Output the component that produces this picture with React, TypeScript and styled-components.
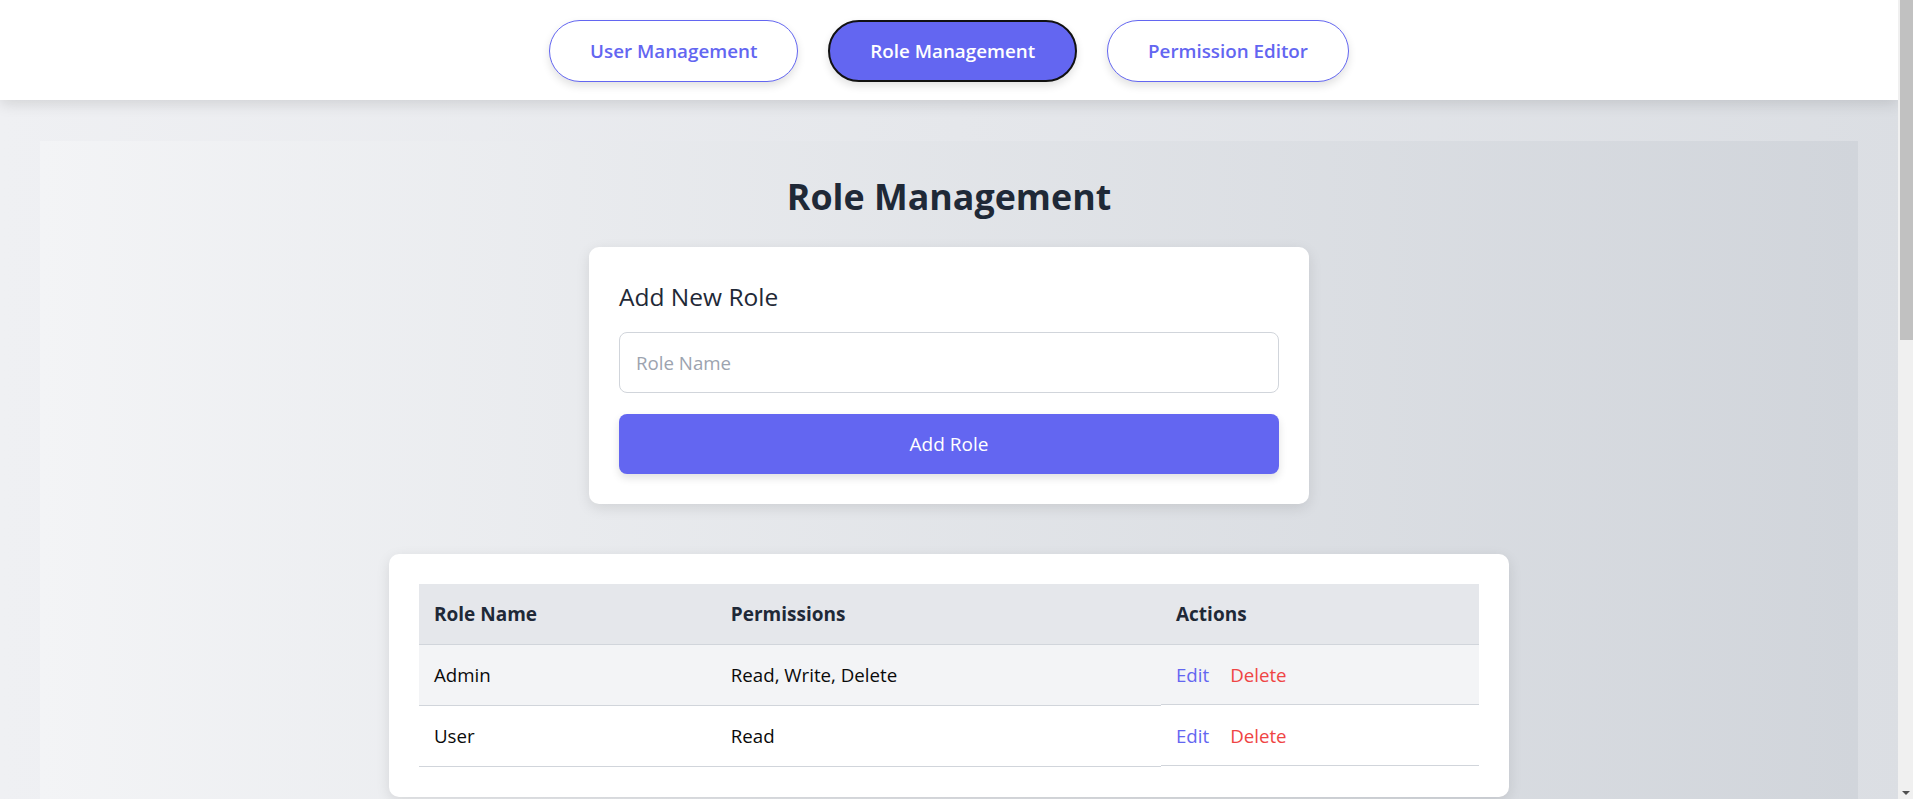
import { FC } from 'react';
import styled, { createGlobalStyle } from 'styled-components';

/* PAGE BASE (right padding leaves room for the scrollbar strip) */
const GlobalStyle = createGlobalStyle`
	html, body {
		margin: 0;
		padding: 0;
	}

	body {
		padding-right: 15px;
		font-family: 'Open Sans', 'Noto Sans', sans-serif;
		background: linear-gradient(to right, #eff0f3, #dbdee3);
		color: #1f2937;
	}

	* {
		box-sizing: border-box;
	}
`;

/* WINDOW SCROLLBAR, drawn over the right edge */
const ScrollTrack = styled.div`
	position: fixed;
	top: 0;
	right: 0;
	width: 15px;
	height: 100vh;
	background: #f0f0f0;
	z-index: 10;
`;

const ScrollThumb = styled.div`
	margin-left: 2px;
	width: 13px;
	height: 340px;
	background: #c1c1c1;
`;

const ScrollArrow = styled.div`
	position: absolute;
	left: 4px;
	bottom: 4px;
	width: 0;
	height: 0;
	border-left: 4px solid transparent;
	border-right: 4px solid transparent;
	border-top: 4px solid #505050;
`;

/* TOP NAV */
const Nav = styled.nav`
	display: flex;
	justify-content: center;
	align-items: flex-start;
	gap: 30px;
	height: 100px;
	padding-top: 20px;
	background: #ffffff;
	box-shadow: 0 4px 14px rgba(0, 0, 0, 0.12);
	position: relative;
	z-index: 2;
`;

const TabButton = styled.button<{ $active?: boolean }>`
	height: 62px;
	padding: 0 40px;
	border-radius: 999px;
	border: ${(props) => (props.$active ? '2px solid #111111' : '1px solid #6366f1')};
	background: ${(props) => (props.$active ? '#6366f1' : '#ffffff')};
	color: ${(props) => (props.$active ? '#ffffff' : '#6366f1')};
	font-family: inherit;
	font-size: 18.8px;
	font-weight: 600;
	cursor: pointer;
	box-shadow: 0 4px 8px rgba(0, 0, 0, 0.12);
`;

/* MAIN AREA */
const Main = styled.main`
	margin: 41px 40px 40px;
	min-height: 1620px;
	background: linear-gradient(to right, #f3f4f6, #d1d5db);
	display: flex;
	flex-direction: column;
	align-items: center;
	padding-top: 34px;
`;

const Title = styled.h1`
	margin: 0 0 30px;
	font-size: 35.8px;
	line-height: 42px;
	font-weight: 700;
	color: #1f2937;
`;

const Card = styled.section<{ $width: number }>`
	width: ${(props) => props.$width}px;
	padding: 30px;
	background: #ffffff;
	border-radius: 10px;
	box-shadow: 0 4px 14px rgba(0, 0, 0, 0.1);
`;

const FormTitle = styled.h3`
	margin: 0 0 16px;
	font-size: 24.5px;
	line-height: 39px;
	font-weight: 500;
	color: #1f2937;
`;

const RoleInput = styled.input`
	display: block;
	width: 100%;
	height: 61px;
	padding: 0 16px;
	margin-bottom: 21px;
	border: 1px solid #d1d5db;
	border-radius: 8px;
	font-family: inherit;
	font-size: 18.7px;
	color: #1f2937;
	outline: none;

	&::placeholder {
		color: #9ca3af;
	}
`;

const PrimaryButton = styled.button`
	display: block;
	width: 100%;
	height: 60px;
	border: none;
	border-radius: 8px;
	background: #6366f1;
	color: #ffffff;
	font-family: inherit;
	font-size: 19px;
	cursor: pointer;
	box-shadow: 0 4px 8px rgba(0, 0, 0, 0.12);
`;

const TableCard = styled(Card)`
	margin-top: 50px;
`;

/* TABLE */
const Table = styled.table`
	width: 100%;
	border-collapse: collapse;
`;

const HeadCell = styled.th<{ $w: string }>`
	width: ${(props) => props.$w};
	padding: 15px;
	text-align: left;
	font-size: 19px;
	line-height: 30px;
	font-weight: 700;
	color: #1f2937;
	background: #e5e7eb;
	border-bottom: 1px solid #d1d5db;
`;

const Cell = styled.td<{ $shade: boolean }>`
	padding: 15px;
	font-size: 18.7px;
	line-height: 30px;
	color: #0a0a0a;
	background: ${(props) => (props.$shade ? '#f3f4f6' : '#ffffff')};
	border-bottom: 1px solid #d1d5db;
`;

/* actions cell is a flex box, so it sits a hair shorter than the row */
const ActionsCell = styled(Cell)`
	display: flex;
	align-items: center;
	gap: 21px;
`;

const LinkButton = styled.button<{ $danger?: boolean }>`
	padding: 0;
	border: none;
	background: none;
	font-family: inherit;
	font-size: 18.7px;
	line-height: 29px;
	color: ${(props) => (props.$danger ? '#ef4444' : '#6366f1')};
	cursor: pointer;
`;

const roles = [
	{ name: 'Admin', permissions: 'Read, Write, Delete' },
	{ name: 'User', permissions: 'Read' }
];

const App: FC = () => {
	return (
		<>
			<GlobalStyle />
			<Nav>
				<TabButton>User Management</TabButton>
				<TabButton $active>Role Management</TabButton>
				<TabButton>Permission Editor</TabButton>
			</Nav>

			<Main>
				<Title>Role Management</Title>

				<Card $width={720}>
					<FormTitle>Add New Role</FormTitle>
					<RoleInput placeholder="Role Name" />
					<PrimaryButton>Add Role</PrimaryButton>
				</Card>

				<TableCard $width={1120}>
					<Table>
						<thead>
							<tr>
								<HeadCell $w="28%">Role Name</HeadCell>
								<HeadCell $w="42%">Permissions</HeadCell>
								<HeadCell $w="30%">Actions</HeadCell>
							</tr>
						</thead>
						<tbody>
							{roles.map((role, i) => (
								<tr key={role.name}>
									<Cell $shade={i % 2 === 0}>{role.name}</Cell>
									<Cell $shade={i % 2 === 0}>{role.permissions}</Cell>
									<ActionsCell $shade={i % 2 === 0}>
										<LinkButton>Edit</LinkButton>
										<LinkButton $danger>Delete</LinkButton>
									</ActionsCell>
								</tr>
							))}
						</tbody>
					</Table>
				</TableCard>
			</Main>

			<ScrollTrack>
				<ScrollThumb />
				<ScrollArrow />
			</ScrollTrack>
		</>
	);
};

export default App;
